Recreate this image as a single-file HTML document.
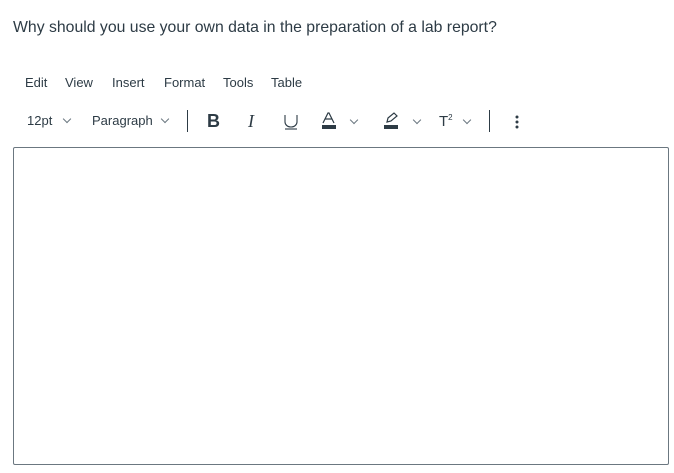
<!DOCTYPE html>
<html><head><style>
body{margin:0;width:674px;height:473px;background:#fff;font-family:"Liberation Sans",sans-serif;color:#2d3b45;position:relative;overflow:hidden}
.a{position:absolute;white-space:nowrap}
.q{left:13px;top:19px;font-size:15.8px}
.m{top:75px;font-size:13px}
.t{top:113px;font-size:13px}
.chev{position:absolute;width:5px;height:5px;border-right:1px solid #6b7780;border-bottom:1px solid #6b7780;transform:rotate(45deg)}
.sep{position:absolute;width:1px;height:22px;background:#2d3b45;top:110px}
.box{position:absolute;left:13px;top:147px;width:654px;height:316px;border:1px solid #6b7780;border-radius:2px}
</style></head><body>
<div class="a q">Why should you use your own data in the preparation of a lab report?</div>
<div class="a m" style="left:25px">Edit</div>
<div class="a m" style="left:65px">View</div>
<div class="a m" style="left:112px">Insert</div>
<div class="a m" style="left:164px">Format</div>
<div class="a m" style="left:223px">Tools</div>
<div class="a m" style="left:271px">Table</div>
<div class="a t" style="left:27px">12pt</div><div class="chev" style="left:64px;top:116px"></div>
<div class="a t" style="left:92px">Paragraph</div><div class="chev" style="left:162px;top:116px"></div>
<div class="sep" style="left:187px"></div>
<div class="a" style="left:207px;top:111px;font-size:18px;font-weight:bold">B</div>
<div class="a" style="left:248px;top:111px;font-size:18px;font-style:italic;font-family:'Liberation Serif',serif">I</div>
<svg class="a" style="left:283px;top:114px" width="16" height="16"><path d="M2 1v7a6 5 0 0 0 12 0V1" fill="none" stroke="#2d3b45" stroke-width="1.1"/><path d="M2 15h12" stroke="#2d3b45" stroke-width="1.1"/></svg>
<svg class="a" style="left:321px;top:112px" width="16" height="18"><path d="M2 11L7 1h1l5 10M4 7h7" fill="none" stroke="#2d3b45" stroke-width="1.2"/><rect x="1" y="13" width="14" height="4" fill="#2d3b45"/></svg>
<div class="chev" style="left:351px;top:117px"></div>
<svg class="a" style="left:383px;top:112px" width="16" height="18"><path d="M4 10l1-4 6-5 3 3-6 5z" fill="none" stroke="#2d3b45" stroke-width="1.2"/><rect x="1" y="13" width="14" height="4" fill="#2d3b45"/></svg>
<div class="chev" style="left:414px;top:117px"></div>
<div class="a" style="left:439px;top:113px;font-size:15px">T<sup style="font-size:8px">2</sup></div>
<div class="chev" style="left:464px;top:117px"></div>
<div class="sep" style="left:489px"></div>
<svg class="a" style="left:514px;top:114px" width="6" height="16"><circle cx="3" cy="3" r="1.5" fill="#2d3b45"/><circle cx="3" cy="8" r="1.5" fill="#2d3b45"/><circle cx="3" cy="13" r="1.5" fill="#2d3b45"/></svg>
<div class="box"></div>
</body></html>
